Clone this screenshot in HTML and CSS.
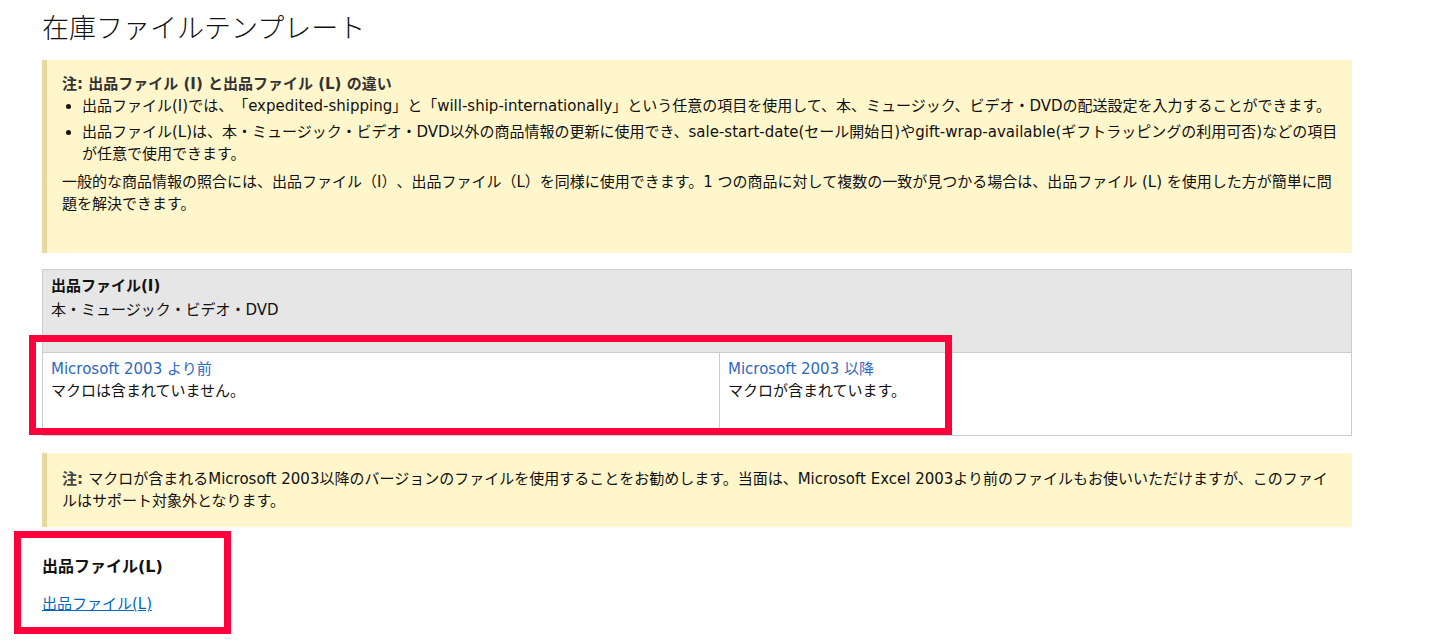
FILE: index.html
```html
<!DOCTYPE html>
<html lang="ja">
    <head>
        <meta charset="utf-8">
        <title>在庫ファイルテンプレート</title>
        <link rel="stylesheet" href="styles.css">
    </head>
    <body>

        <div class="page">

            <h1 class="pageTitle">在庫ファイルテンプレート</h1>

            <div class="note noteLarge">
                <div class="noteTitle">注: 出品ファイル (I) と出品ファイル (L) の違い</div>
                <ul class="noteList">
                    <li>出品ファイル(I)では、「expedited-shipping」と「will-ship-internationally」という任意の項目を使用して、本、ミュージック、ビデオ・DVDの配送設定を入力することができます。</li>
                    <li>出品ファイル(L)は、本・ミュージック・ビデオ・DVD以外の商品情報の更新に使用でき、sale-start-date(セール開始日)やgift-wrap-available(ギフトラッピングの利用可否)などの項目が任意で使用できます。</li>
                </ul>
                <p class="noteText">一般的な商品情報の照合には、出品ファイル（I）、出品ファイル（L）を同様に使用できます。1 つの商品に対して複数の一致が見つかる場合は、出品ファイル (L) を使用した方が簡単に問題を解決できます。</p>
            </div>

            <div class="fileTable">
                <div class="fileHead">
                    <div class="fileName">出品ファイル(I)</div>
                    <div>本・ミュージック・ビデオ・DVD</div>
                </div>
                <div class="fileRow">
                    <div class="fileCell">
                        <a class="fileLink" href="#">Microsoft 2003 より前</a>
                        <div>マクロは含まれていません。</div>
                    </div>
                    <div class="fileCell">
                        <a class="fileLink" href="#">Microsoft 2003 以降</a>
                        <div>マクロが含まれています。</div>
                    </div>
                </div>
            </div>

            <p class="note noteSmall"><b class="noteLabel">注: </b>マクロが含まれるMicrosoft 2003以降のバージョンのファイルを使用することをお勧めします。当面は、Microsoft Excel 2003より前のファイルもお使いいただけますが、このファイルはサポート対象外となります。</p>

            <h3 class="sectionTitle">出品ファイル(L)</h3>
            <a class="plainLink" href="#">出品ファイル(L)</a>

            <!-- red annotation frames drawn over the page -->
            <div class="markBox markTable"></div>
            <div class="markBox markSection"></div>

        </div>

    </body>
</html>
```

FILE: styles.css
```css
body
    {
        margin:      0;
        background:  #fff;
        color:       #111;
        font-family: "DejaVu Sans", "Noto Sans CJK JP", sans-serif;
        font-size:   15px;
        line-height: 22px;
        text-spacing-trim: space-all;
    }

.page
    {
        position:    relative;
        width:       1310px;
        height:      641px;
        padding:     0 0 0 42px;
    }

.pageTitle
    {
        margin:      0;
        padding-top: 9px;
        font-family: "Noto Sans CJK JP", sans-serif;
        font-size:   27px;
        font-weight: 300;
        line-height: 36px;
        color:       #111;
    }

.note
    {
        background:  #fff6cc;
        border-left: 5px solid #e8d99c;
    }

.noteLarge
    {
        margin-top:  15px;
        padding:     13px 12px 38px 15px;
    }

.noteSmall
    {
        margin:      17px 0 0 0;
        padding:     15px 22px 15px 15px;
    }

.noteTitle
    {
        font-weight: bold;
        color:       #333;
    }

.noteLabel
    {
        color:       #444;
    }

.noteList
    {
        margin:       0;
        padding-left: 20px;
    }

.noteList li + li
    {
        margin-top:  4px;
    }

.noteText
    {
        margin:      6px 0 0 0;
    }

.fileTable
    {
        margin-top:  16px;
    }

.fileHead
    {
        background:  #e6e6e6;
        border:      1px solid #ccc;
        padding:     5px 8px 31px 8px;
    }

.fileName
    {
        font-weight:   bold;
        margin-bottom: 2px;
    }

.fileRow
    {
        display:       grid;
        grid-template-columns: 677px 1fr;
        border:        1px solid #ccc;
        border-top:    none;
    }

.fileCell
    {
        padding:       5px 8px 33px 8px;
    }

.fileCell:first-child
    {
        border-right:  1px solid #ccc;
    }

.fileLink
    {
        color:           #2f68c0;
        text-decoration: none;
    }

.sectionTitle
    {
        margin:      29px 0 0 0;
        font-size:   16px;
        font-weight: bold;
        line-height: 22px;
    }

.plainLink
    {
        display:     inline-block;
        margin-top:  15px;
        color:       #0066c0;
        text-decoration: underline;
    }

.markBox
    {
        position:    absolute;
        box-sizing:  border-box;
        border:      7px solid #ff003c;
    }

.markTable
    {
        left:    29px;
        top:     335px;
        width:   923px;
        height:  100px;
    }

.markSection
    {
        left:    14px;
        top:     531px;
        width:   217px;
        height:  103px;
    }
```
